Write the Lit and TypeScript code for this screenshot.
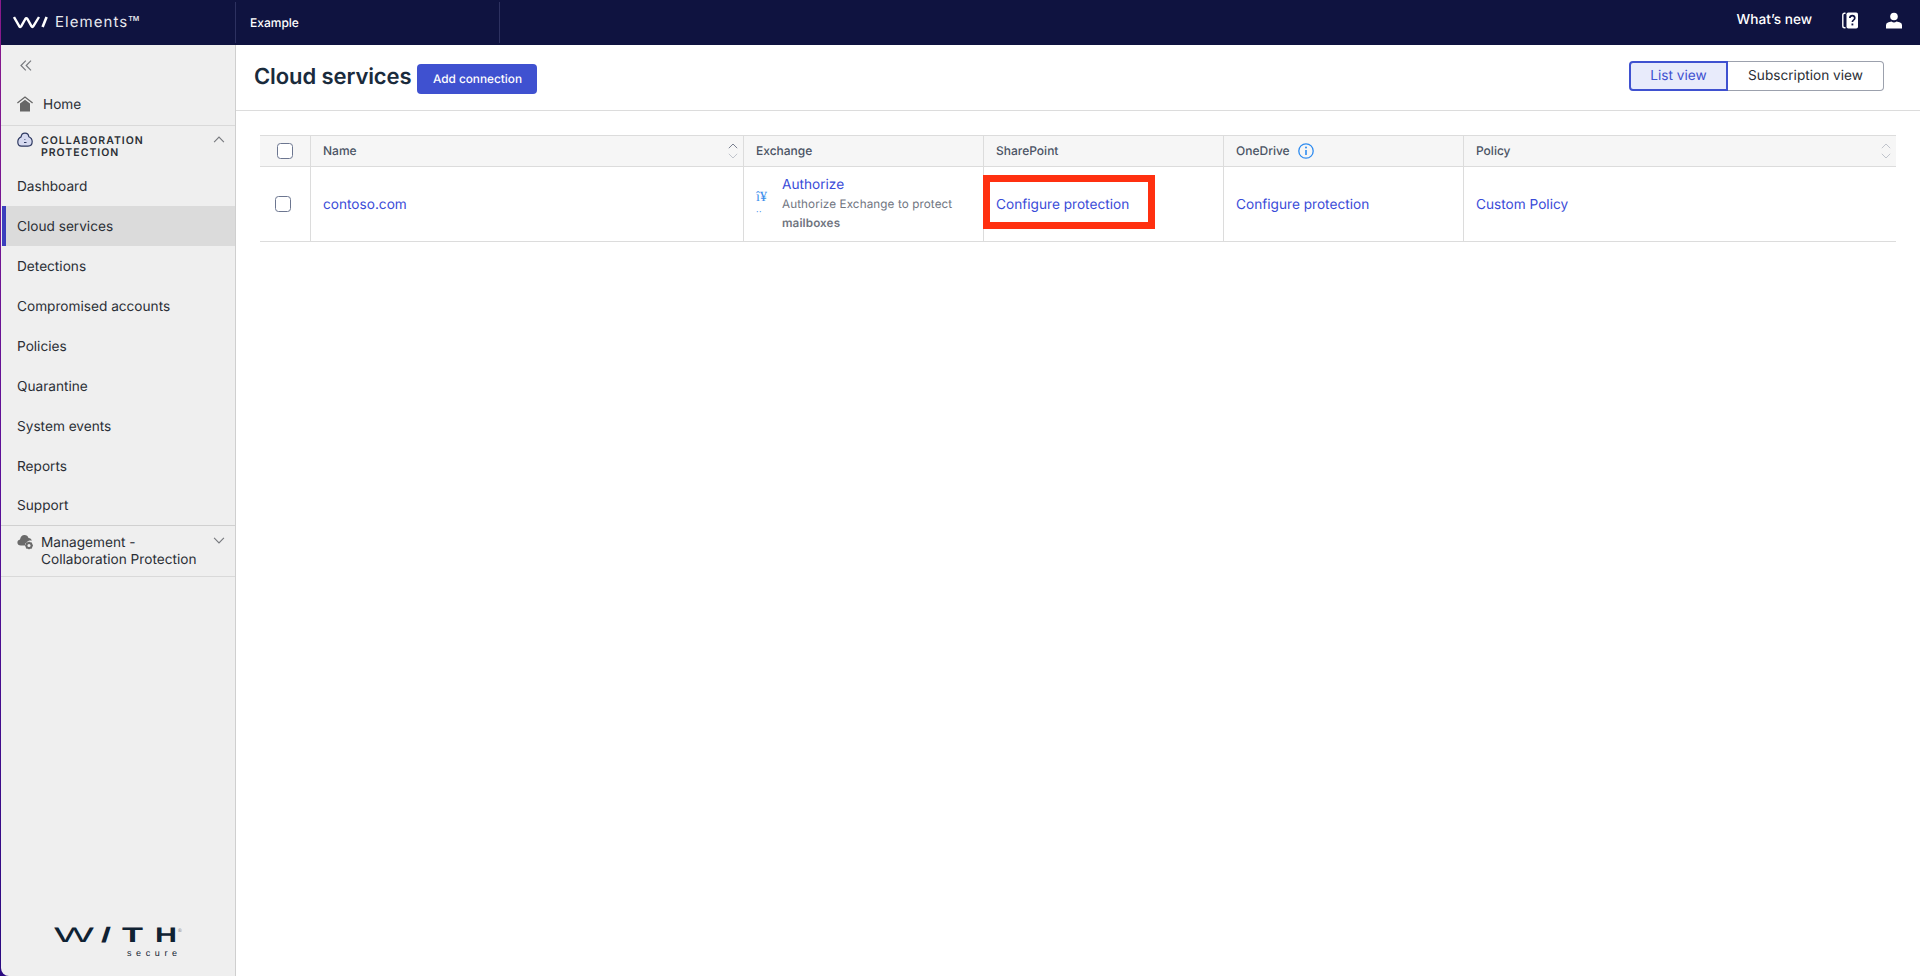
import { LitElement, html, css } from "lit";
import { customElement } from "lit/decorators.js";

const chevUp = (cls: string) => html`<svg class="chev ${cls}" viewBox="0 0 10 6" width="10" height="6"><path d="M.8 5.2 5 1l4.2 4.2" fill="none" stroke="currentColor" stroke-width="1"/></svg>`;
const chevDown = (cls: string) => html`<svg class="chev ${cls}" viewBox="0 0 10 6" width="10" height="6"><path d="M.8.8 5 5 9.2.8" fill="none" stroke="currentColor" stroke-width="1"/></svg>`;

@customElement("app-root")
export class AppRoot extends LitElement {
  static styles = css`
    :host { display: flex; flex-direction: column; height: 976px; width: 1920px; overflow: hidden; padding-left: 1px; box-sizing: border-box;
      background: linear-gradient(#8a1a8c, #5a0f98 50%, #2a0a80); font-family: Inter, "Liberation Sans", sans-serif; color: #2a2e35; font-size: 13.65px; text-rendering: geometricPrecision; }
    * { box-sizing: border-box; }
    .top { height: 45px; background: #0f1340; color: #fff; display: flex; align-items: stretch; flex: none; }
    .brand { width: 234px; display: flex; align-items: center; padding-left: 12px; padding-bottom: 1px; gap: 6px; }
    .brand-name { font-size: 15px; letter-spacing: 1.05px; color: #e8e8ee; position: relative; top: -1px; }
    .brand-name sup { font-size: 7px; letter-spacing: 0; vertical-align: 6px; line-height: 0; font-weight: 600; }
    .tenant { width: 265px; margin: 2px 0; border-left: 1px solid #2d3160; border-right: 1px solid #2d3160; display: flex; align-items: center; padding-left: 14px; font-size: 12px; font-weight: 500; }
    .top-right { margin-left: auto; display: flex; align-items: center; padding-right: 18px; padding-bottom: 5px; }
    .news { font-weight: 500; font-size: 13.65px; margin-right: 30px; }
    .help { margin-right: 28px; display: block; }
    .user { display: block; }
    .body { flex: 1; display: flex; min-height: 0; }
    .side { width: 235px; flex: none; background: #efefef; border-right: 1px solid #cfcfcf; border-bottom-left-radius: 8px; display: flex; flex-direction: column; }
    .collapse { height: 40px; display: flex; align-items: center; padding-left: 19px; color: #77797e; }
    .home { height: 41px; padding: 0 0 1px 16px; display: flex; align-items: center; gap: 10px; border-bottom: 1px solid #d9d9d9; }
    .home svg { margin-top: -2px; }
    .sec { display: flex; align-items: flex-start; padding: 9px 10px 0 16px; height: 40px; }
    .sec .ico { width: 16px; height: 16px; margin-right: 8px; flex: none; margin-top: -3px; }
    .sec-title { font-size: 10.5px; font-weight: 600; letter-spacing: 1px; line-height: 12px; color: #2c2f36; flex: 1; }
    .sec .chev { color: #77797e; margin-top: 1px; width: 12px; height: 7px; margin-right: 0; }
    .item { height: 40px; display: flex; align-items: center; padding: 1px 0 0 16px; }
    .item.active { background: #dbdbdb; border-left: 4px solid #3c3fbd; margin-left: 1px; padding-left: 11px; }
    .item.last { height: 39px; padding-top: 0; }
    .sec2 { border-top: 1px solid #d0d0d0; border-bottom: 1px solid #d9d9d9; display: flex; padding: 8px 10px 7px 16px; align-items: flex-start; }
    .sec2 .ico { width: 17px; height: 16px; margin-right: 7px; flex: none; }
    .sec2-title { flex: 1; line-height: 17px; color: #2a2e35; padding-top: 1px; }
    .sec2 .chev { color: #77797e; margin-top: 3px; width: 12px; height: 7px; }
    .logo { margin-top: auto; padding: 0 0 10px 53px; }
    .logo svg { display: block; }
    .main { flex: 1; background: #fff; display: flex; flex-direction: column; min-width: 0; }
    .head { height: 66px; flex: none; border-bottom: 1px solid #dcdcdc; display: flex; align-items: flex-start; padding: 16px 36px 0 18px; }
    h1 { margin: 0; font-size: 22px; font-weight: 600; line-height: 32px; color: #1a2b3c; letter-spacing: -.1px; }
    .add { margin: 3px 0 0 6px; height: 30px; width: 120px; border: 0; border-radius: 4px; background: #3f51d0; color: #fff; font: 500 11.8px Inter, sans-serif; padding: 0 0 1px; text-rendering: geometricPrecision; }
    .toggle { margin-left: auto; display: flex; height: 30px; }
    .toggle div { display: flex; align-items: center; justify-content: center; }
    .t1 { width: 99px; border: 2px solid #3f51d0; border-radius: 4px 0 0 4px; background: #e8ebfb; color: #3f51d0; }
    .t2 { width: 156px; border: 1px solid #9ca1ad; border-left: 0; border-radius: 0 4px 4px 0; color: #2a2e35; }
    .tbl { margin: 24px 24px 0; display: grid; grid-template-columns: 50px 433px 240px 240px 240px 433px; grid-template-rows: 32px 75px; }
    .th { background: #f6f6f6; border-top: 1px solid #dcdcdc; border-bottom: 1px solid #dcdcdc; border-left: 1px solid #dcdcdc; display: flex; align-items: center; padding: 0 12px 1px; font-size: 12px; font-weight: 500; color: #4a5364; position: relative; }
    .td { border-bottom: 1px solid #dcdcdc; border-left: 1px solid #dcdcdc; display: flex; align-items: center; padding: 1px 12px 0; position: relative; }
    .first { border-left: 0; padding: 0; }
    .box { width: 16px; height: 16px; border: 1.5px solid #6c7690; border-radius: 3.5px; background: #fff; }
    .th .box { margin-left: 17px; }
    .td .box { margin-left: 15px; }
    a { color: #3a4bd8; text-decoration: none; }
    .sort { position: absolute; right: 5px; top: 7px; display: flex; flex-direction: column; gap: 4px; }
    .sort .chev { display: block; }
    .dark { color: #7a8090; }
    .light { color: #c0c4cc; }
    .info { margin-left: 8px; display: block; }
    .auth { display: flex; align-items: center; gap: 12px; }
    .glyph { width: 14px; color: #3d8fec; font-family: "Liberation Serif", serif; font-size: 14px; line-height: 14px; margin-top: -3px; white-space: nowrap; }
    .glyph span { display: block; font-size: 10px; line-height: 10px; letter-spacing: .5px; }
    .auth-t { line-height: 19px; display: flex; flex-direction: column; }
    .sub { font-size: 11.7px; color: #70757f; letter-spacing: .1px; }
    .sub b { font-weight: 600; display: block; }
    .red { position: absolute; left: -1px; top: 8px; width: 172px; height: 54px; border: 7px solid #ff3010; }
  `;

  render() {
    return html`
      <div class="top">
        <div class="brand">
          <svg width="36" height="14" viewBox="0 0 36 14"><path d="M1 2 6.2 11.2q1.1 1.6 2.1 0L12.3 4q1-1.6 2.1 0l4 7.2q1 1.6 2 0L26 2" fill="none" stroke="#fff" stroke-width="2.4"/><path d="M33.6 2 29.6 12" fill="none" stroke="#fff" stroke-width="2.6"/></svg>
          <span class="brand-name">Elements<sup>TM</sup></span>
        </div>
        <div class="tenant">Example</div>
        <div class="top-right">
          <span class="news">What’s new</span>
          <svg class="help" width="16" height="17" viewBox="0 0 16 17"><path d="M3.5 1.2H2.6Q.8 1.2.8 3v11q0 1.8 1.8 1.8h.9" fill="none" stroke="#fff" stroke-width="1.4"/><rect x="4.5" y=".5" width="11.5" height="16" rx="1.8" fill="#fff"/><path d="M7.8 6q.2-2.3 2.5-2.3T12.800 6q0 1.300-1.300 2.100-1.100.7-1.100 2" fill="none" stroke="#0f1340" stroke-width="1.700"/><rect x="9.500" y="11.500" width="1.800" height="1.900" fill="#0f1340"/></svg>
          <svg class="user" width="16" height="17" viewBox="0 0 16 17"><circle cx="8" cy="4.500" r="3.800" fill="#fff"/><path d="M0 16.500V13q0-2.200 2.500-2.700L5.500 9.500q2.500 2.200 5 0l3 .8Q16 11 16 13v3.500Z" fill="#fff"/></svg>
        </div>
      </div>
      <div class="body">
        <aside class="side">
          <div class="collapse"><svg width="12" height="11" viewBox="0 0 12 11"><path d="M5.800.6 1 5.500l4.800 4.900M11 .6 6.200 5.500l4.800 4.900" fill="none" stroke="currentColor" stroke-width="1.200"/></svg></div>
          <div class="home">
            <svg width="16" height="16" viewBox="0 0 16 16"><path d="M.4 7 8 1l7.600 6" fill="none" stroke="#666" stroke-width="1.300"/><path d="M3 7.500 8 3.800l5 3.700V15.500H3Z" fill="#666"/></svg>
            <span>Home</span>
          </div>
          <div class="sec">
            <svg class="ico" viewBox="0 0 16 16"><path d="M8 1.200c2.300 0 3.600 1.700 3.800 3.500 2 .8 3.400 2.400 3.400 4.900 0 2.800-1.700 4.600-4.200 4.600H4.500C2.200 14.200.8 12.500.8 10c0-2.300 1.200-4.200 3.300-5.100C4.300 2.900 5.700 1.200 8 1.200Z" fill="#d6daf0" stroke="#2f3a62" stroke-width="1.200"/><path d="M7.500 7.500h.8M7 10.500h2.500" stroke="#2f3a62" stroke-width="1"/></svg>
            <div class="sec-title">COLLABORATION<br />PROTECTION</div>
            ${chevUp("")}
          </div>
          <div class="item">Dashboard</div>
          <div class="item active">Cloud services</div>
          <div class="item">Detections</div>
          <div class="item">Compromised accounts</div>
          <div class="item">Policies</div>
          <div class="item">Quarantine</div>
          <div class="item">System events</div>
          <div class="item">Reports</div>
          <div class="item last">Support</div>
          <div class="sec2">
            <svg class="ico" viewBox="0 0 17 16"><path d="M3.800 11.500C1.700 11.500.4 10.300.4 8.500c0-1.600 1-2.800 2.600-3.100C3.400 3 5 1 7.500 1c2 0 3.500 1.200 4 3 1.800.2 3 1.200 3.400 2.700-2-.6-4 0-5 1.500-1 .3-2 1.500-2 3.300Z" fill="#6a6a6a"/><circle cx="12" cy="11.500" r="2.600" fill="none" stroke="#6a6a6a" stroke-width="2"/><path d="M12 7.700v1.300M12 14v1.300M8.200 11.500h1.300M14.500 11.500h1.300M9.300 8.800l.9.900M13.800 13.300l.9.900M14.700 8.800l-.9.900M10.200 13.300l-.9.900" stroke="#6a6a6a" stroke-width="1.400"/></svg>
            <div class="sec2-title">Management -<br />Collaboration Protection</div>
            ${chevDown("")}
          </div>
          <div class="logo">
            <svg width="130" height="48" viewBox="0 0 130 48" fill="#0f2233" font-family="Liberation Sans, sans-serif">
              <text x="0" y="24" font-size="21" textLength="40" lengthAdjust="spacingAndGlyphs">W</text>
              <text x="47" y="24" font-weight="700" font-size="21" textLength="10" lengthAdjust="spacingAndGlyphs">/</text>
              <text x="68" y="24" font-weight="700" font-size="21" textLength="21" lengthAdjust="spacingAndGlyphs">T</text>
              <text x="101" y="24" font-weight="700" font-size="21" textLength="22" lengthAdjust="spacingAndGlyphs">H</text>
              <text x="124" y="14" font-size="5" fill="#777">®</text>
              <text x="73" y="38" font-size="9" textLength="50" lengthAdjust="spacing">secure</text>
            </svg>
          </div>
        </aside>
        <main class="main">
          <div class="head">
            <h1>Cloud services</h1>
            <button class="add">Add connection</button>
            <div class="toggle"><div class="t1">List view</div><div class="t2">Subscription view</div></div>
          </div>
          <div class="tbl">
            <div class="th first"><span class="box"></span></div>
            <div class="th">Name<span class="sort">${chevUp("dark")}${chevDown("light")}</span></div>
            <div class="th">Exchange</div>
            <div class="th">SharePoint</div>
            <div class="th">OneDrive<svg class="info" width="16" height="16" viewBox="0 0 16 16"><circle cx="8" cy="8" r="7.200" fill="none" stroke="#2f8cf0" stroke-width="1.300"/><path d="M8 7v5" stroke="#2f8cf0" stroke-width="1.600"/><circle cx="8" cy="4.600" r="1" fill="#2f8cf0"/></svg></div>
            <div class="th">Policy<span class="sort">${chevUp("light")}${chevDown("light")}</span></div>

            <div class="td first"><span class="box"></span></div>
            <div class="td"><a>contoso.com</a></div>
            <div class="td"><div class="auth"><div class="glyph">î¥<span>..</span></div><div class="auth-t"><a>Authorize</a><span class="sub">Authorize Exchange to protect<b>mailboxes</b></span></div></div></div>
            <div class="td"><a>Configure protection</a><div class="red"></div></div>
            <div class="td"><a>Configure protection</a></div>
            <div class="td"><a>Custom Policy</a></div>
          </div>
        </main>
      </div>
    `;
  }
}
